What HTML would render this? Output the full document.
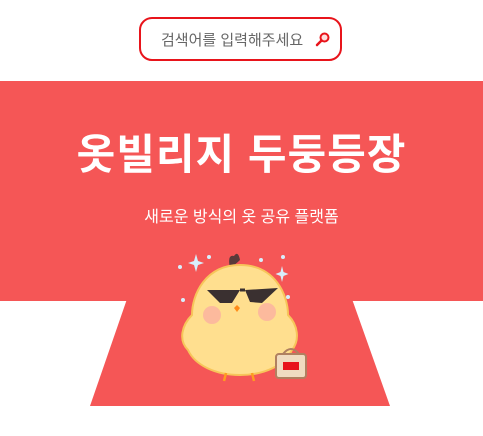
<!DOCTYPE html>
<html><head><meta charset="utf-8"><style>
body{margin:0;width:483px;height:436px;background:#fff;position:relative;overflow:hidden;font-family:"Liberation Sans","Noto Sans CJK KR",sans-serif}
.search{position:absolute;left:139px;top:17px;width:199px;height:40px;border:2px solid #e8141b;border-radius:13px;box-sizing:content-box}
.search span{position:absolute;left:20px;top:10px;font-size:15px;color:#666}
.banner{position:absolute;left:0;top:81px;width:483px;height:220px;background:#f55656}
h1{position:absolute;top:121px;left:0;width:483px;margin:0;text-align:center;color:#fff;font-size:42px;font-weight:bold;letter-spacing:1px}
.sub{position:absolute;top:203px;left:0;width:483px;text-align:center;color:#fff;font-size:16px}
</style></head><body>
<div class="search"><span>검색어를 입력해주세요</span>
<svg style="position:absolute;left:174px;top:12px" width="16" height="16" viewBox="0 0 16 16"><circle cx="9.5" cy="6.5" r="4" fill="#fdd" stroke="#e8141b" stroke-width="2"/><line x1="6.5" y1="9.5" x2="2" y2="14" stroke="#e8141b" stroke-width="2.5" stroke-linecap="round"/></svg></div>
<div class="banner"></div>
<svg style="position:absolute;left:0;top:299px" width="483" height="108"><polygon points="127,0 352,0 390,107 90,107" fill="#f55656"/></svg>
<h1>옷빌리지 두둥등장</h1>
<div class="sub">새로운 방식의 옷 공유 플랫폼</div>
<svg style="position:absolute;left:170px;top:240px" width="140" height="150" viewBox="0 0 140 150">
<path d="M60 28 q-3-14 4-12 q4-6 6 4 q-4 4-10 8z" fill="#5a3a3a"/>
<path d="M70 25 C35 25 22 55 22 75 C12 85 8 100 18 110 C25 125 45 135 70 135 C95 135 115 125 122 110 C130 100 128 85 118 75 C118 55 105 25 70 25z" fill="#ffdf8f" stroke="#f7c55a" stroke-width="2"/>
<path d="M37 50 L70 50 L62 63 L50 63z M75 50 L108 48 L92 63 L80 62z" fill="#3a3030"/>
<path d="M70 50 L75 50" stroke="#3a3030" stroke-width="3"/>
<path d="M64 68 l3-3 l3 3 l-3 4z" fill="#ff8c1a"/>
<circle cx="42" cy="75" r="9" fill="#fbb0a0" opacity=".8"/><circle cx="97" cy="72" r="9" fill="#fbb0a0" opacity=".8"/>
<path d="M56 133 l-2 8 M82 133 l2 8" stroke="#ff9b20" stroke-width="2.5"/>
<rect x="106" y="114" width="30" height="24" rx="3" fill="#f0dbc0" stroke="#b08060" stroke-width="2"/>
<path d="M113 114 q8-10 16 0" fill="none" stroke="#b08060" stroke-width="2"/>
<rect x="113" y="122" width="16" height="8" fill="#e8141b"/>
<path d="M26 14 l2 7 l6 2 l-6 2 l-2 7 l-2-7 l-6-2 l6-2z M112 26 l1.5 6 l5 2 l-5 2 l-1.5 6 l-1.5-6 l-5-2 l5-2z" fill="#d8eefb"/>
<g fill="#d8eefb"><circle cx="39" cy="17" r="2"/><circle cx="10" cy="27" r="2"/><circle cx="13" cy="60" r="2"/><circle cx="91" cy="20" r="2"/><circle cx="113" cy="17" r="2"/><circle cx="118" cy="57" r="2"/></g>
</svg>
</body></html>
